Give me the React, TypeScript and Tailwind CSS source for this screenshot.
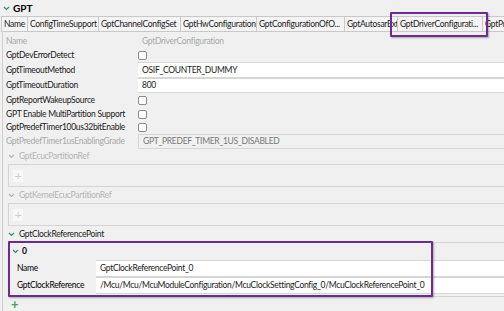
import React from "react";

const tabs = [
  { label: "Name", w: "w-[26px]" },
  { label: "ConfigTimeSupport", w: "w-[71px]" },
  { label: "GptChannelConfigSet", w: "w-[82px]" },
  { label: "GptHwConfiguration", w: "w-[76px]" },
  { label: "GptConfigurationOfO...", w: "w-[88px]" },
  { label: "GptAutosarExt", w: "w-[53px]" },
  { label: "GptDriverConfigurati...", w: "w-[85px]" },
  { label: "GptPr", w: "w-[40px]" },
];

const Chevron = ({ className }: { className: string }) => (
  <svg width="7" height="5" viewBox="0 0 7 5" className={className}>
    <path d="M1 1 L3.5 3.5 L6 1" fill="none" stroke="currentColor" strokeWidth="1.2" />
  </svg>
);

const Check = () => (
  <div className="w-[9px] h-[9px] border border-[#8a8a8a] rounded-[2px] bg-white" />
);

const Row = ({ label, children, h = "h-[15px]", muted = false }: { label: string; children?: React.ReactNode; h?: string; muted?: boolean }) => (
  <div className={`flex items-center ${h}`}>
    <div className={`w-[135px] pl-[3px] shrink-0 whitespace-nowrap ${muted ? "text-[#a8a8a8]" : "text-[#1a1a1a]"}`}>{label}</div>
    <div className="flex-1 flex items-center h-full">{children}</div>
  </div>
);

const Input = ({ value, disabled = false }: { value: string; disabled?: boolean }) => (
  <div
    className={`flex-1 h-full flex items-center pl-[4px] border-y border-[#d6d6d6] whitespace-nowrap overflow-hidden ${
      disabled ? "bg-[#f0f0f0] border-l border-[#cfcfcf] text-[#777]" : "bg-white text-[#1a1a1a]"
    }`}
  >
    {value}
  </div>
);

const RefSection = ({ label }: { label: string }) => (
  <>
    <div className="flex items-center h-[14px] pl-[5px] gap-[4px] text-[#b4b4b4]">
      <Chevron className="text-[#b4b4b4]" />
      <span>{label}</span>
    </div>
    <div className="ml-[5px] h-[23px] border border-r-0 border-[#d4d4d4] flex items-center pl-[4px] my-[1px]">
      <div className="w-[10px] h-[12px] bg-[#f8f8f8] flex items-center justify-center text-[#cdcdcd] text-[12px] leading-none">+</div>
    </div>
  </>
);

export default function App() {
  return (
    <div
      className="relative w-[504px] h-[311px] overflow-hidden bg-[#f0f0f0] text-[8.5px] tracking-[-0.3px] leading-none"
      style={{ fontFamily: "Lato, 'Noto Sans', sans-serif" }}
    >
      <div className="flex items-center h-[16px] pl-[3px] gap-[3px]">
        <Chevron className="text-[#2a8f7a]" />
        <span className="font-bold text-[10px] tracking-normal text-black">GPT</span>
      </div>
      <div className="ml-[1px] flex h-[16px] border-y border-[#c8c8c8] bg-[#f4f4f4]">
        {tabs.map((t) => (
          <div key={t.label} className={`${t.w} shrink-0 border-l border-[#c8c8c8] flex items-center pl-[2px] overflow-hidden whitespace-nowrap text-[#1a1a1a]`}>
            {t.label}
          </div>
        ))}
      </div>
      <div className="ml-[2px] border-l border-[#cfcfcf] pt-[2px]">
        <Row label="Name" h="h-[14px]" muted>
          <span className="pl-[4px] text-[#a8a8a8]">GptDriverConfiguration</span>
        </Row>
        <Row label="GptDevErrorDetect" h="h-[14px]"><Check /></Row>
        <Row label="GptTimeoutMethod" h="h-[16px]"><Input value="OSIF_COUNTER_DUMMY" /></Row>
        <Row label="GptTimeoutDuration" h="h-[15px]"><Input value="800" /></Row>
        <Row label="GptReportWakeupSource" h="h-[14px]"><Check /></Row>
        <Row label="GPT Enable MultiPartition Support" h="h-[14px]"><Check /></Row>
        <Row label="GptPredefTimer100us32bitEnable" h="h-[13px]"><Check /></Row>
        <Row label="GptPredefTimer1usEnablingGrade" h="h-[15px]" muted>
          <Input value="GPT_PREDEF_TIMER_1US_DISABLED" disabled />
        </Row>
        <RefSection label="GptEcucPartitionRef" />
        <RefSection label="GptKernelEcucPartitionRef" />
        <div className="flex items-center h-[14px] pl-[5px] gap-[4px] text-[#1a1a1a]">
          <Chevron className="text-[#2a8f7a]" />
          <span>GptClockReferencePoint</span>
        </div>
        <div className="ml-[5px] border border-r-0 border-[#d4d4d4] mt-[1px] pb-[2px]">
          <div className="flex items-center h-[16px] pl-[3px] gap-[3px]">
            <Chevron className="text-[#2a8f7a]" />
            <span className="font-bold">0</span>
          </div>
          <div className="flex items-center h-[17px] mt-[1px]">
            <div className="w-[87px] pl-[8px] shrink-0 whitespace-nowrap">Name</div>
            <Input value="GptClockReferencePoint_0" />
          </div>
          <div className="flex items-center h-[17px]">
            <div className="w-[87px] pl-[8px] shrink-0 whitespace-nowrap">GptClockReference</div>
            <Input value="/Mcu/Mcu/McuModuleConfiguration/McuClockSettingConfig_0/McuClockReferencePoint_0" />
          </div>
        </div>
        <div className="pl-[8px] h-[14px] flex items-center text-[#3aa860] font-bold text-[13px]">+</div>
      </div>
      <div className="absolute left-[390px] top-[12px] w-[98px] h-[25px] border-2 border-[#6b2c91] rounded-[1px] shadow-[1px_1px_2px_rgba(0,0,0,0.3)]" />
      <div className="absolute left-[8px] top-[241px] w-[425px] h-[56px] border-2 border-[#6b2c91] rounded-[1px] shadow-[1px_1px_2px_rgba(0,0,0,0.3)]" />
    </div>
  );
}
